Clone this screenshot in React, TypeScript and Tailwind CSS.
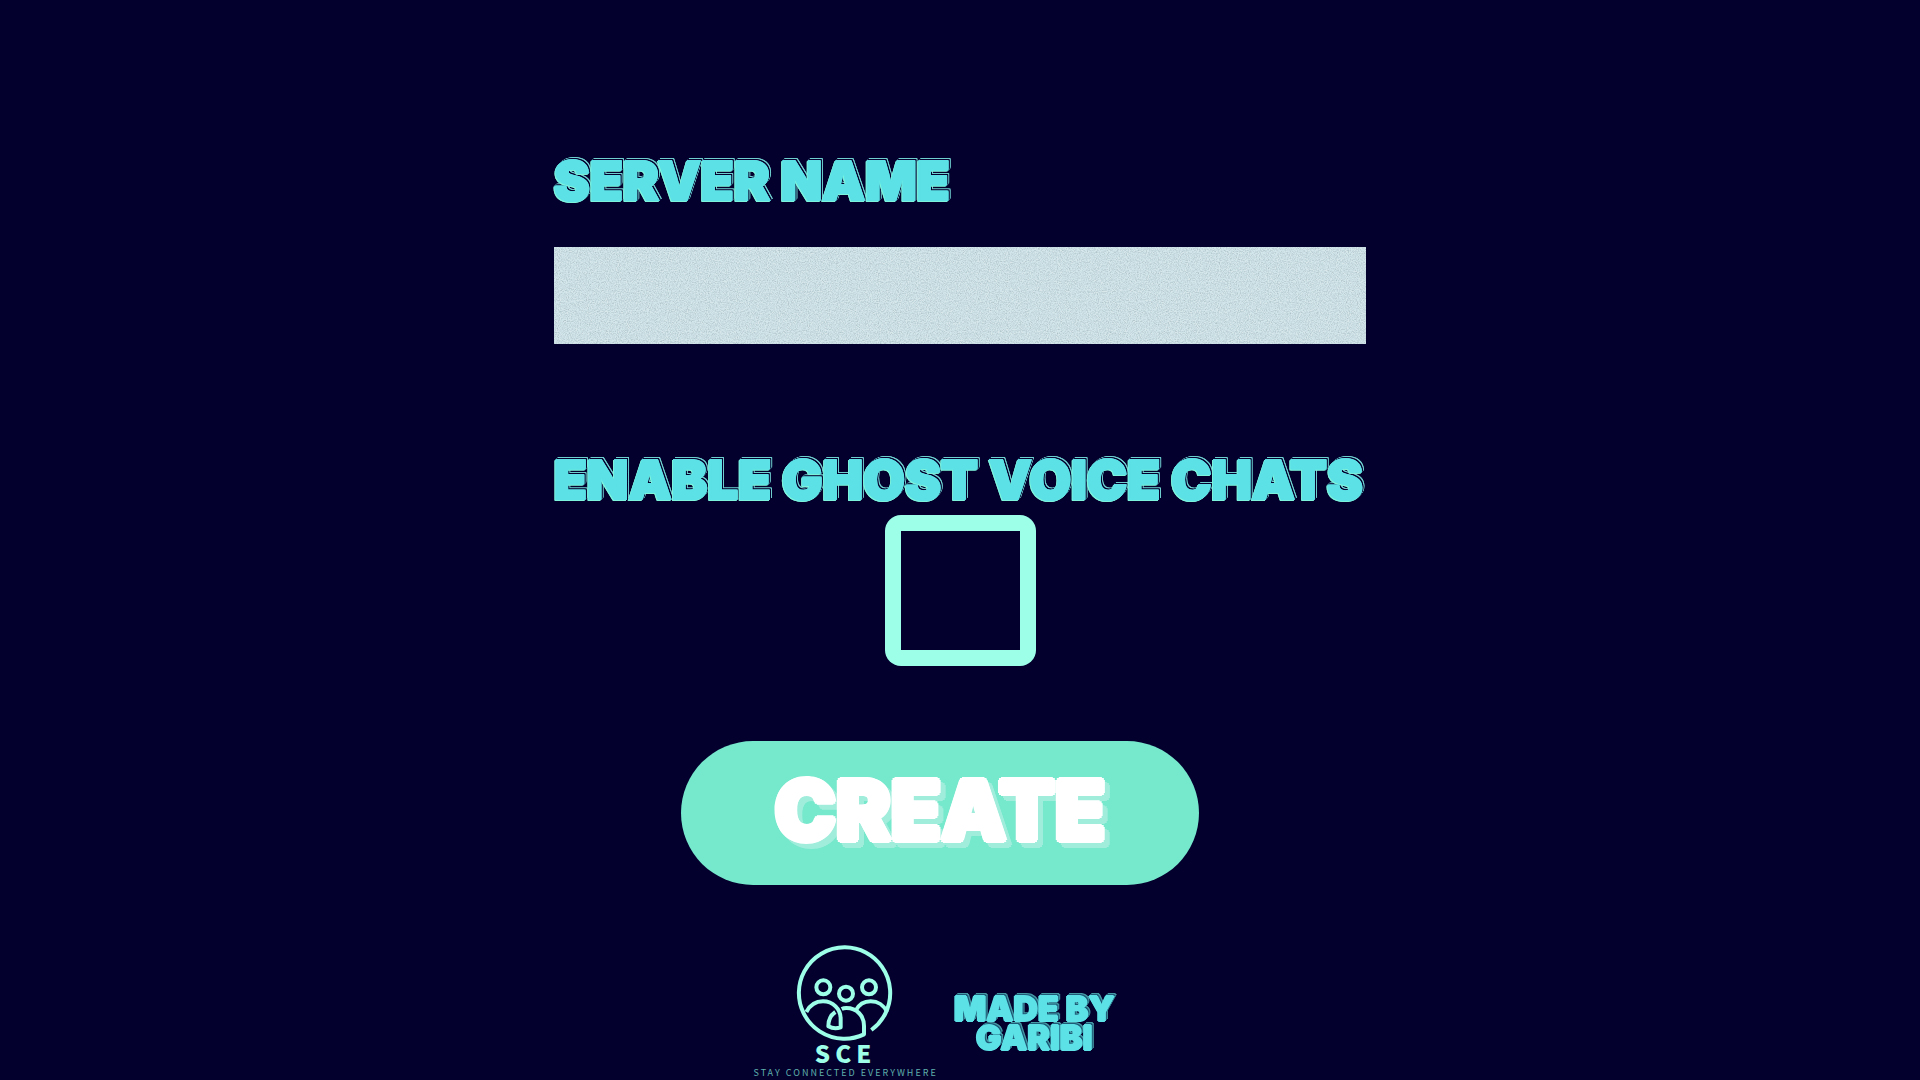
import React from "react";

const display =
  "font-['Inter',sans-serif] font-black uppercase whitespace-nowrap";

const cyan =
  "text-[#5ce1e6] [-webkit-text-stroke:2px_#5ce1e6] [text-shadow:1px_0_0_#5ce1e6,-1px_0_0_#5ce1e6,0_1px_0_#5ce1e6,0_-1px_0_#5ce1e6] [filter:drop-shadow(-1px_1px_0_#7df3dc)_drop-shadow(1px_-1px_0_#03002e)_drop-shadow(1px_-1px_0_#6fcfcf)]";

const cyanSmall =
  "text-[#5ce1e6] [text-shadow:1px_0_0_#5ce1e6,-1px_0_0_#5ce1e6,0_1px_0_#5ce1e6,0_-1px_0_#5ce1e6] [filter:drop-shadow(1px_-1px_0_#1d5a78)_drop-shadow(1px_-1px_0_#459aa5)]";

const whiteRaised =
  "text-white [text-shadow:3px_0_0_#fff,-3px_0_0_#fff,0_3px_0_#fff,0_-3px_0_#fff,2px_2px_0_#fff,-2px_2px_0_#fff,2px_-2px_0_#fff,-2px_-2px_0_#fff] [filter:drop-shadow(5px_5px_0_#a0eddc)]";

function Logo() {
  return (
    <div className="flex flex-col items-center text-[#9dffe8] font-['Noto_Sans_CJK_SC',sans-serif]">
      <svg
        viewBox="166 43 288 288"
        className="size-24 overflow-visible"
        fill="none"
        stroke="currentColor"
        strokeWidth="12"
        strokeLinejoin="round"
        role="img"
        aria-label="Three people in a circle"
      >
        <path d="M297 241C301 239 306 238 311 238C343 238 364 262 364 292V317A137 137 0 1 1 386 304" />
        <path d="M191 250C202 229 219 218 241 218C271 218 294 241 294 270V296Q275 303 257 293C257 272 264 259 278 250" />
        <path d="M339 246C349 227 364 218 384 218C405 218 424 230 433 250" />
        <circle cx="242" cy="176" r="21" />
        <circle cx="310" cy="195" r="21" />
        <circle cx="379" cy="176" r="21" />
      </svg>
      <span className="text-2xl leading-7 font-black tracking-[5px]">SCE</span>
      <span className="text-[9px] leading-3 tracking-[2px] whitespace-nowrap text-[#5fb0ac]">
        STAY CONNECTED EVERYWHERE
      </span>
    </div>
  );
}

export default function App() {
  return (
    <main className="flex min-h-screen justify-center overflow-hidden bg-[#03002e]">
      <form className="flex w-full max-w-[812px] flex-col pt-[157px]" onSubmit={(e) => e.preventDefault()}>
        <label htmlFor="server-name" className={`${display} ${cyan} text-[54px] leading-[48px]`}>
          Server name
        </label>
        <div className="relative mt-[42px] h-[97px] bg-[#c9dde2]">
          <svg className="pointer-events-none absolute inset-0 size-full opacity-30" aria-hidden="true">
            <filter id="grain" colorInterpolationFilters="sRGB">
              <feTurbulence type="fractalNoise" baseFrequency="0.9" numOctaves="2" seed="4" />
              <feColorMatrix
                type="matrix"
                values="0.7 0.5 0 0 0.2  0.7 0.5 0 0 0.28  0.7 0.5 0 0 0.3  0 0 0 0 1"
              />
            </filter>
            <rect width="100%" height="100%" filter="url(#grain)" />
          </svg>
          <input
            id="server-name"
            type="text"
            className="relative size-full bg-transparent px-6 text-4xl text-[#03002e] outline-none"
          />
        </div>

        <label htmlFor="ghost" className={`${display} ${cyan} mt-28 text-[54px] leading-[48px]`}>
          Enable ghost voice chats
        </label>
        <div className="mt-[11px] self-center rounded-2xl bg-[#9dffe8] p-4">
          <input
            id="ghost"
            type="checkbox"
            className="block size-[119px] appearance-none bg-[#03002e] checked:bg-[#5ce1e6]"
          />
        </div>

        <div className="flex flex-col items-center pr-10">
          <button
            type="submit"
            className="mt-[75px] h-36 w-[518px] rounded-full bg-[#76e8cc] pb-1"
          >
            <span className={`${display} ${whiteRaised} text-[82px] leading-none`}>Create</span>
          </button>
          <footer className="mt-[58px] flex items-start gap-4 pr-3">
            <Logo />
            <p className={`${display} ${cyanSmall} mt-[51px] text-center text-[34px] leading-[29px]`}>
              Made by
              <br />
              Garibi
            </p>
          </footer>
        </div>
      </form>
    </main>
  );
}
